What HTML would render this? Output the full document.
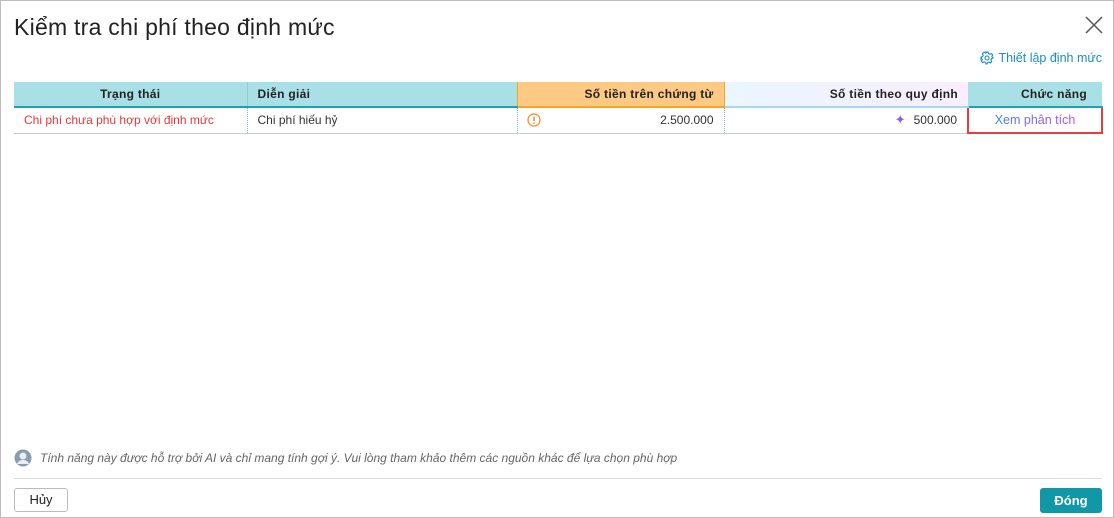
<!DOCTYPE html>
<html><head><meta charset="utf-8"><style>
*{box-sizing:border-box;margin:0;padding:0}
body{width:1114px;height:518px;overflow:hidden;background:#fff;font-family:"Liberation Sans","DejaVu Sans",sans-serif;position:relative}
.frame{position:absolute;left:0;top:0;width:1114px;height:518px;border:1px solid #bdbdbd}
.title{position:absolute;left:14px;top:14px;font-size:23px;color:#222;letter-spacing:0.25px}
.close{position:absolute;left:1085px;top:16px}
.setup{position:absolute;right:12px;top:51px;font-size:12.5px;color:#1a8fbf;display:flex;align-items:center;gap:4px}
table{position:absolute;left:14px;top:82px;width:1088px;border-collapse:collapse;font-size:12px;table-layout:fixed}
th{height:25px;font-weight:bold;color:#222;padding:0 10px;border-bottom:2px solid #1aa3b4;font-size:12px;letter-spacing:0.3px}
td{height:26px;padding:0 10px;border-bottom:1px solid #ccc;color:#333}
.h1{background:#a9e0e6;text-align:center;border-right:1px solid #8ccfd6}
.h2{background:#a9e0e6;text-align:left}
.h3{background:#fec982;text-align:right;border-bottom-color:#f5a623;border-left:1px solid #f5a623;border-right:1px solid #f5a623}
.h4{background:linear-gradient(90deg,#eaf6ff,#f8eeff);text-align:right;border-bottom-color:#a5d8f5}
.h5{background:#a9e0e6;text-align:right;padding-right:15px}
td+td{border-left:1px dotted #7bbcc7}
.red{color:#e5383b}
.sel{border:2px solid #e53e3e !important;text-align:center}
.sel span{background:linear-gradient(90deg,#3b82f6,#c04ef0);-webkit-background-clip:text;color:transparent;font-size:12.5px}
.note{position:absolute;left:14px;top:449px;font-size:12px;font-style:italic;color:#666;display:flex;align-items:center;gap:8px}
.line{position:absolute;left:14px;right:12px;top:478px;border-top:1px solid #ddd}
.cancel{position:absolute;left:14px;top:488px;width:54px;height:24px;border:1px solid #bbb;border-radius:3px;font-size:13px;text-align:center;line-height:22px;color:#222}
.ok{position:absolute;left:1040px;top:488px;width:62px;height:25px;background:#1297a6;border-radius:3px;color:#fff;font-weight:bold;font-size:13px;text-align:center;line-height:25px}
</style></head><body>
<div class="frame"></div>
<div class="title">Kiểm tra chi phí theo định mức</div>
<svg class="close" width="18" height="18" viewBox="0 0 18 18"><path d="M1 1L17 17M17 1L1 17" stroke="#555" stroke-width="1.5"/></svg>
<div class="setup"><svg width="14" height="14" viewBox="0 0 14 14" fill="none" stroke="#1a8fbf" stroke-width="1.1"><circle cx="7" cy="7" r="2"/><path d="M6 1h2l.4 1.6 1.4.7 1.5-.8 1.4 1.4-.8 1.5.6 1.4L13 7v0l-1.5.6-.6 1.4.8 1.5-1.4 1.4-1.5-.8-1.4.6L7 13 6 13l-.4-1.6-1.4-.6-1.5.8-1.4-1.4.8-1.5-.6-1.4L1 8V6l1.6-.4.6-1.4-.8-1.5 1.4-1.4 1.5.8 1.4-.7z"/></svg>Thiết lập định mức</div>
<table>
<colgroup><col style="width:233px"><col style="width:270px"><col style="width:207px"><col style="width:244px"><col style="width:134px"></colgroup>
<tr><th class="h1">Trạng thái</th><th class="h2">Diễn giải</th><th class="h3">Số tiền trên chứng từ</th><th class="h4">Số tiền theo quy định</th><th class="h5">Chức năng</th></tr>
<tr><td class="red">Chi phí chưa phù hợp với định mức</td><td>Chi phí hiếu hỷ</td>
<td style="text-align:right;position:relative"><svg style="position:absolute;left:9px;top:5px" width="14" height="14" viewBox="0 0 14 14"><circle cx="7" cy="7" r="6" fill="none" stroke="#f08a24" stroke-width="1.2"/><path d="M7 3.5v4.5" stroke="#f08a24" stroke-width="1.4"/><circle cx="7" cy="10.2" r=".8" fill="#f08a24"/></svg>2.500.000</td>
<td style="text-align:right"><span style="color:#8b5cf6;font-size:13px;margin-right:8px">✦</span>500.000</td>
<td class="sel"><span>Xem phân tích</span></td></tr>
</table>
<div class="note"><svg width="18" height="18" viewBox="0 0 18 18"><circle cx="9" cy="9" r="8.5" fill="#8a9bb0"/><circle cx="9" cy="7" r="3.5" fill="#e8eef4"/><path d="M3 15c1-3 3.5-4 6-4s5 1 6 4" fill="#e8eef4"/></svg>Tính năng này được hỗ trợ bởi AI và chỉ mang tính gợi ý. Vui lòng tham khảo thêm các nguồn khác để lựa chọn phù hợp</div>
<div class="line"></div>
<div class="cancel">Hủy</div>
<div class="ok">Đóng</div>
</body></html>
